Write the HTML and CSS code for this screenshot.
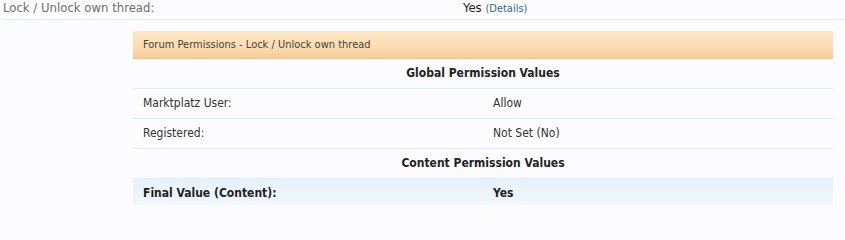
FILE: index.html
```html
<!DOCTYPE html>
<html>
<head>
<meta charset="utf-8">
<link rel="stylesheet" href="styles.css">
</head>
<body>
<div class="page">
  <div class="toprow">
    <div class="toplabel">Lock / Unlock own thread:</div>
    <div class="topvalue">Yes <a class="details" href="#">(Details)</a></div>
  </div>
  <div class="perm">
    <div class="perm-head">Forum Permissions - Lock / Unlock own thread</div>
    <div class="row section">Global Permission Values</div>
    <div class="row pair"><div class="cell">Marktplatz User:</div><div class="cell">Allow</div></div>
    <div class="row pair"><div class="cell">Registered:</div><div class="cell">Not Set (No)</div></div>
    <div class="row section">Content Permission Values</div>
    <div class="row pair final"><div class="cell">Final Value (Content):</div><div class="cell">Yes</div></div>
  </div>
</div>
</body>
</html>
```

FILE: styles.css
```css
html, body {
  margin: 0;
  padding: 0;
  background: #fcfcff;
}
body {
  font-family: "DejaVu Sans Condensed", "DejaVu Sans", sans-serif;
  font-stretch: semi-condensed;
  color: #333;
}
.page {
  width: 845px;
  height: 205px;
  overflow: hidden;
}
.toprow {
  display: grid;
  grid-template-columns: 460px 1fr;
  margin-left: 2px;
  padding-left: 1px;
  padding-bottom: 2px;
  border-bottom: 1px solid #d7edfc;
  font-size: 13px;
  line-height: 16px;
}
.toplabel {
  color: #6e6e6e;
}
.topvalue {
  color: #222;
}
.details {
  color: #35658f;
  font-size: 11px;
  text-decoration: none;
}
.perm {
  margin: 11px 12px 0 133px;
  font-size: 12px;
}
.perm-head {
  height: 27px;
  line-height: 27px;
  padding-left: 10px;
  font-size: 11px;
  color: #4a3f33;
  background: linear-gradient(to bottom, #fde6c6 0%, #fbdcb3 60%, #f8cc95 100%);
  border-bottom: 1px solid #f3c287;
}
.row {
  height: 29px;
  line-height: 29px;
  border-bottom: 1px solid #d7edfc;
}
.section {
  text-align: center;
  font-weight: bold;
  color: #222;
}
.pair {
  display: grid;
  grid-template-columns: 1fr 1fr;
}
.cell {
  padding-left: 10px;
}
.final {
  font-weight: bold;
  color: #222;
  border-bottom: none;
  height: 30px;
  background: linear-gradient(to bottom, #e6f1fa 0%, #f3f8fc 100%);
}
```
